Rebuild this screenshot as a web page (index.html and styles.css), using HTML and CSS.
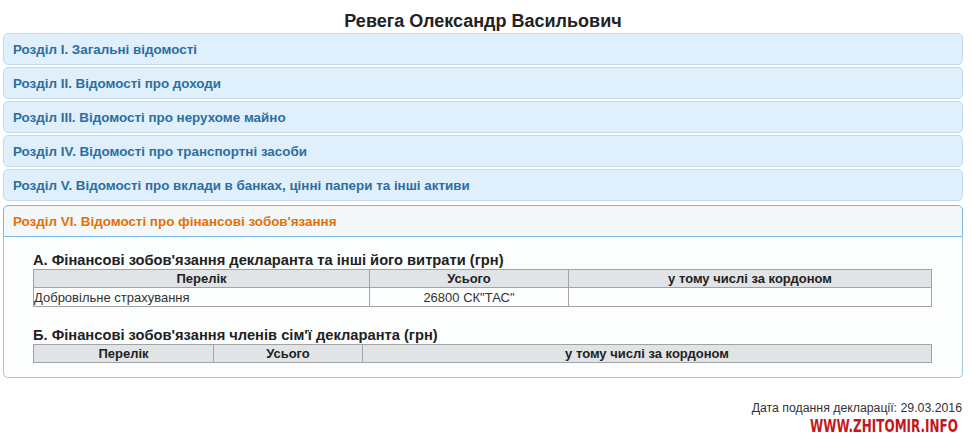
FILE: index.html
```html
<!DOCTYPE html>
<html lang="uk">
<head>
    <meta charset="UTF-8">
    <title>Ревега Олександр Васильович</title>
    <link rel="stylesheet" href="styles.css">
</head>
<body>
    <div class="wrap">
        <h1 class="person-name">Ревега Олександр Васильович</h1>

        <div class="accordion">
            <div class="acc-header">Розділ I. Загальні відомості</div>
            <div class="acc-header">Розділ II. Відомості про доходи</div>
            <div class="acc-header">Розділ III. Відомості про нерухоме майно</div>
            <div class="acc-header">Розділ IV. Відомості про транспортні засоби</div>
            <div class="acc-header">Розділ V. Відомості про вклади в банках, цінні папери та інші активи</div>
            <div class="acc-header active">Розділ VI. Відомості про фінансові зобов'язання</div>
            <div class="acc-content">
                <h3 class="sub-title">А. Фінансові зобов'язання декларанта та інші його витрати (грн)</h3>
                <table class="decl-table first">
                    <colgroup>
                        <col style="width: 336px">
                        <col style="width: 199px">
                        <col>
                    </colgroup>
                    <tr>
                        <th>Перелік</th>
                        <th>Усього</th>
                        <th>у тому числі за кордоном</th>
                    </tr>
                    <tr>
                        <td>Добровільне страхування</td>
                        <td class="center">26800 СК"ТАС"</td>
                        <td></td>
                    </tr>
                </table>

                <h3 class="sub-title">Б. Фінансові зобов'язання членів сім'ї декларанта (грн)</h3>
                <table class="decl-table">
                    <colgroup>
                        <col style="width: 180px">
                        <col style="width: 149px">
                        <col>
                    </colgroup>
                    <tr>
                        <th>Перелік</th>
                        <th>Усього</th>
                        <th>у тому числі за кордоном</th>
                    </tr>
                </table>
            </div>
        </div>

        <div class="decl-date">Дата подання декларації: 29.03.2016</div>
        <div class="watermark"><span>WWW.ZHITOMIR.INFO</span></div>
    </div>
</body>
</html>
```

FILE: styles.css
```css
* {
    margin: 0;
    padding: 0;
    box-sizing: border-box;
}

body {
    font-family: 'Liberation Sans', Arial, sans-serif;
    background: #fff;
    color: #222;
}

.wrap {
    width: 960px;
    margin-left: 3px;
    padding-top: 11px;
}

.person-name {
    font-size: 18px;
    line-height: 20px;
    text-align: center;
    color: #222;
    margin-bottom: 2px;
}

.acc-header {
    height: 32px;
    line-height: 31px;
    margin-top: 2px;
    padding-left: 9px;
    border: 1px solid #c5dbec;
    border-radius: 5px;
    background: #dfeffc;
    color: #2e6e9e;
    font-size: 13.4px;
    font-weight: bold;
}

.acc-header.active {
    margin-top: 4px;
    border-color: #79b7e7;
    border-radius: 5px 5px 0 0;
    background: #f5f8f9;
    color: #e17009;
}

.acc-content {
    border: 1px solid #a6c9e2;
    border-top: 0;
    border-radius: 0 0 5px 5px;
    background: #fcfdfd;
    padding: 14px 30px 14px 29px;
}

.sub-title {
    font-size: 14.7px;
    line-height: 18px;
    color: #222;
}

.decl-table {
    width: 100%;
    border-collapse: collapse;
    table-layout: fixed;
    font-size: 12px;
}

.decl-table.first {
    margin-bottom: 19px;
}

.decl-table th {
    height: 18px;
    background: #e1e4e7;
    border: 1px solid #a3a3a3;
    font-size: 13px;
    font-weight: bold;
    line-height: 16px;
    color: #222;
    padding: 0;
}

.decl-table td {
    height: 19px;
    border: 1px solid #a3a3a3;
    font-size: 13px;
    line-height: 17px;
    color: #333;
    padding: 0;
}

.decl-table td.center {
    text-align: center;
}

.decl-date {
    margin-top: 22px;
    text-align: right;
    font-size: 12.3px;
    line-height: 16px;
    color: #333;
    padding-right: 1px;
}

.watermark {
    text-align: right;
    padding-right: 5px;
    font-family: 'DejaVu Sans Condensed', 'DejaVu Sans', sans-serif;
    font-stretch: condensed;
    font-weight: bold;
    font-size: 18px;
    line-height: 20px;
    color: #c4161c;
}

.watermark span {
    display: inline-block;
    transform: scaleX(0.74);
    transform-origin: right center;
}
```
